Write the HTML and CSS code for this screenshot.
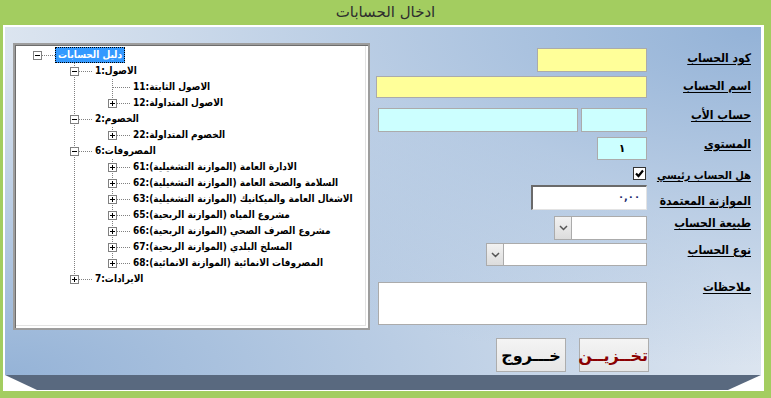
FILE: index.html
```html
<!DOCTYPE html>
<html lang="ar">
<head>
    <meta charset="UTF-8">
    <meta name="viewport" content="width=device-width, initial-scale=1.0">
    <title>ادخال الحسابات</title>
    <link rel="stylesheet" href="styles.css">
</head>
<body>
    <div class="window">
        <div class="title-bar">ادخال الحسابات</div>
        <div class="frame">
            <div class="panel">
                <!-- شجرة دليل الحسابات -->
                <div class="tree-box">
                    <ul class="tree">
                        <li class="node">
                            <div class="row"><span class="exp"></span><span class="dots"></span><span class="label selected">دليل الحسابات</span></div>
                            <ul class="children lvl1">
                                <li class="node">
                                    <div class="row"><span class="exp"></span><span class="dots"></span><span class="label">الاصول:1</span></div>
                                    <ul class="children lvl2">
                                        <li class="node"><div class="row"><span class="leaf"></span><span class="dots long"></span><span class="label">الاصول الثابتة:11</span></div></li>
                                        <li class="node"><div class="row"><span class="exp plus"></span><span class="dots"></span><span class="label">الاصول المتداولة:12</span></div></li>
                                    </ul>
                                </li>
                                <li class="node">
                                    <div class="row"><span class="exp"></span><span class="dots"></span><span class="label">الخصوم:2</span></div>
                                    <ul class="children lvl2">
                                        <li class="node"><div class="row"><span class="exp plus"></span><span class="dots"></span><span class="label">الخصوم المتداولة:22</span></div></li>
                                    </ul>
                                </li>
                                <li class="node">
                                    <div class="row"><span class="exp"></span><span class="dots"></span><span class="label">المصروفات:6</span></div>
                                    <ul class="children lvl2">
                                        <li class="node"><div class="row"><span class="exp plus"></span><span class="dots"></span><span class="label">الادارة العامة (الموازنة التشغيلية):61</span></div></li>
                                        <li class="node"><div class="row"><span class="exp plus"></span><span class="dots"></span><span class="label">السلامة والصحة العامة (الموازنة التشغيلية):62</span></div></li>
                                        <li class="node"><div class="row"><span class="exp plus"></span><span class="dots"></span><span class="label">الاشغال العامة والميكانيك (الموازنة التشغيلية):63</span></div></li>
                                        <li class="node"><div class="row"><span class="exp plus"></span><span class="dots"></span><span class="label">مشروع المياه (الموازنة الربحية):65</span></div></li>
                                        <li class="node"><div class="row"><span class="exp plus"></span><span class="dots"></span><span class="label">مشروع الصرف الصحي (الموازنة الربحية):66</span></div></li>
                                        <li class="node"><div class="row"><span class="exp plus"></span><span class="dots"></span><span class="label">المسلخ البلدي (الموازنة الربحية):67</span></div></li>
                                        <li class="node"><div class="row"><span class="exp plus"></span><span class="dots"></span><span class="label">المصروفات الانمائية (الموازنة الانمائية):68</span></div></li>
                                    </ul>
                                </li>
                                <li class="node">
                                    <div class="row"><span class="exp plus"></span><span class="dots"></span><span class="label">الايرادات:7</span></div>
                                </li>
                            </ul>
                        </li>
                    </ul>
                </div>

                <!-- نموذج بيانات الحساب -->
                <div class="form">
                    <div class="form-row row-code">
                        <div class="lbl">كود الحساب</div>
                        <input class="field yellow w-code" type="text">
                    </div>
                    <div class="form-row row-name">
                        <div class="lbl">اسم الحساب</div>
                        <input class="field yellow w-full" type="text">
                    </div>
                    <div class="form-row row-parent">
                        <div class="lbl">حساب الأب</div>
                        <input class="field cyan w-parent-code" type="text">
                        <input class="field cyan w-parent-name" type="text">
                    </div>
                    <div class="form-row row-level">
                        <div class="lbl">المستوى</div>
                        <input class="field cyan w-level" type="text" value="١">
                    </div>
                    <div class="form-row row-main">
                        <div class="lbl lbl-tight">هل الحساب رئيسي</div>
                        <span class="check">
                            <svg width="11" height="11" viewBox="0 0 11 11"><path d="M2 5.5 L4.5 8 L9 2.5" fill="none" stroke="#000" stroke-width="2.2"/></svg>
                        </span>
                    </div>
                    <div class="form-row row-budget">
                        <div class="lbl">الموازنة المعتمدة</div>
                        <div class="field sunken w-budget">٠,٠٠</div>
                    </div>
                    <div class="form-row row-nature">
                        <div class="lbl">طبيعة الحساب</div>
                        <div class="combo w-nature">
                            <span class="combo-text"></span>
                            <span class="combo-btn"><svg width="9" height="6" viewBox="0 0 9 6"><path d="M1 1 L4.5 4.5 L8 1" fill="none" stroke="#555" stroke-width="1.5"/></svg></span>
                        </div>
                    </div>
                    <div class="form-row row-type">
                        <div class="lbl">نوع الحساب</div>
                        <div class="combo w-type">
                            <span class="combo-text"></span>
                            <span class="combo-btn"><svg width="9" height="6" viewBox="0 0 9 6"><path d="M1 1 L4.5 4.5 L8 1" fill="none" stroke="#555" stroke-width="1.5"/></svg></span>
                        </div>
                    </div>
                    <div class="form-row row-notes">
                        <div class="lbl">ملاحظات</div>
                        <textarea class="field w-notes"></textarea>
                    </div>
                    <div class="buttons">
                        <button class="btn btn-save" type="button">تخــزيــن</button>
                        <button class="btn btn-exit" type="button">خـــروج</button>
                    </div>
                </div>
            </div>
            <div class="strip"></div>
        </div>
    </div>
</body>
</html>
```

FILE: styles.css
```css
* {
    box-sizing: border-box;
}

body {
    margin: 0;
    padding: 0;
    width: 771px;
    height: 398px;
    overflow: hidden;
    background-color: #a3cd60;
    font-family: "DejaVu Sans", sans-serif;
}

.window {
    width: 771px;
    height: 398px;
}

/* شريط العنوان الأخضر */
.title-bar {
    height: 25px;
    line-height: 25px;
    text-align: center;
    font-size: 15px;
    color: #2e2e2e;
}

.frame {
    margin: 0 7px 0 3px;
    height: 366px;
    border-style: solid;
    border-color: #fff;
    border-width: 2px 3px 1px 2px;
    background-color: #fff;
}

.panel {
    height: 348px;
    display: flex;
    align-items: flex-start;
    padding: 16px 10px 0 8px;
    background:
        radial-gradient(760px 340px at 100% 0%, #93b2d7, rgba(147, 178, 215, 0)),
        radial-gradient(760px 320px at 0% 100%, #95b3d7, rgba(149, 179, 215, 0)),
        #dce5f0;
}

/* الشريط الداكن أسفل النافذة */
.strip {
    height: 15px;
    background-color: #59697f;
    clip-path: polygon(0 0, 100% 0, calc(100% - 33px) 100%, 32px 100%);
}

/* صندوق الشجرة */
.tree-box {
    width: 357px;
    height: 287px;
    background-color: #fff;
    border: 2px solid #9d9d9d;
    box-shadow: inset 1px 1px 0 #6d6d6d, inset -2px -2px 0 #fff, inset -3px -3px 0 #e3e3e3;
    font-family: "DejaVu Sans Condensed", "DejaVu Sans", sans-serif;
    font-stretch: condensed;
    font-size: 10px;
    font-weight: bold;
    color: #000;
    overflow: hidden;
}

.tree,
.children {
    list-style: none;
    margin: 0;
    padding: 0;
}

.tree {
    padding: 2px 0 0 18px;
}

.lvl1 {
    padding-left: 37px;
}

.lvl2 {
    padding-left: 38px;
}

.node {
    position: relative;
}

.children > .node::before {
    content: "";
    position: absolute;
    left: 4px;
    top: 0;
    bottom: 0;
    width: 1px;
    background-image: linear-gradient(to bottom, #808080 1px, transparent 1px);
    background-size: 1px 2px;
}

.children > .node:last-child::before {
    bottom: auto;
    height: 8px;
}

.row {
    display: flex;
    align-items: center;
    height: 16px;
    white-space: nowrap;
}

.exp {
    position: relative;
    z-index: 1;
    flex: none;
    width: 9px;
    height: 9px;
    border: 1px solid #808080;
    background-color: #fff;
}

.exp::before {
    content: "";
    position: absolute;
    left: 1px;
    top: 3px;
    width: 5px;
    height: 1px;
    background-color: #000;
}

.exp.plus::after {
    content: "";
    position: absolute;
    left: 3px;
    top: 1px;
    width: 1px;
    height: 5px;
    background-color: #000;
}

.leaf {
    flex: none;
    width: 5px;
}

.dots {
    flex: none;
    width: 13px;
    height: 1px;
    background-image: linear-gradient(to right, #808080 1px, transparent 1px);
    background-size: 2px 1px;
}

.dots.long {
    width: 17px;
}

.label {
    flex: none;
    direction: rtl;
    unicode-bidi: isolate;
    padding: 0 2px;
    line-height: 14px;
    border: 1px solid transparent;
}

.label.selected {
    background-color: #3399ff;
    color: #fff;
    border: 1px dotted #000;
}

/* النموذج */
.form {
    flex: 1;
    direction: rtl;
    margin: 5px 0 0 6px;
}

.form-row {
    display: flex;
    align-items: flex-start;
}

.lbl {
    flex: none;
    width: 104px;
    font-family: "DejaVu Sans Condensed", "DejaVu Sans", sans-serif;
    font-stretch: condensed;
    font-size: 12px;
    font-weight: bold;
    line-height: 16px;
    color: #000;
    text-decoration: underline;
    text-underline-offset: 2px;
    white-space: nowrap;
}

.lbl-tight {
    font-size: 11px;
}

.row-code { height: 24px; }
.row-code .lbl { margin-top: 2px; }

.row-name { height: 22px; margin-top: 4px; }
.row-name .lbl { margin-top: 2px; }

.row-parent { height: 24px; margin-top: 10px; }
.row-parent .lbl { margin-top: -1px; }

.row-level { height: 23px; margin-top: 5px; }
.row-level .lbl { margin-top: -1px; }

.row-main { height: 13px; margin-top: 7px; }
.row-main .lbl { margin-top: 1px; }

.row-budget { height: 25px; margin-top: 5px; }
.row-budget .lbl { margin-top: 8px; }

.row-nature { height: 24px; margin-top: 6px; }
.row-nature .lbl { margin-top: -1px; }

.row-type { height: 23px; margin-top: 3px; }
.row-type .lbl { margin-top: -1px; }

.row-notes { height: 43px; margin-top: 16px; }
.row-notes .lbl { margin-top: -3px; }

.field {
    height: 100%;
    margin: 0;
    padding: 0 4px;
    border: 1px solid #ababab;
    background-color: #fff;
    font-family: "DejaVu Sans", sans-serif;
    font-size: 11px;
    font-weight: bold;
    outline: none;
}

.yellow {
    background-color: #ffff99;
}

.cyan {
    background-color: #ccffff;
}

.w-code { width: 110px; }
.w-full { width: 271px; }
.w-parent-code { width: 66px; }
.w-parent-name { width: 200px; margin-right: 3px; }
.w-level { width: 50px; text-align: center; }
.w-budget { width: 116px; }
.w-notes { width: 269px; resize: none; }

.sunken {
    border-width: 2px 1px 1px 2px;
    border-color: #6a6a6a #e3e3e3 #e3e3e3 #6a6a6a;
    border-style: solid;
    font-size: 10px;
    line-height: 20px;
    padding: 0 6px;
    color: #1c2a6b;
}

.check {
    flex: none;
    width: 13px;
    height: 13px;
    margin-right: 1px;
    border: 1px solid #333;
    background-color: #fff;
    display: flex;
    align-items: center;
    justify-content: center;
}

.combo {
    height: 100%;
    display: flex;
    border: 1px solid #ababab;
    background-color: #fff;
}

.w-nature { width: 93px; }
.w-type { width: 161px; }

.combo-text {
    flex: 1;
}

.combo-btn {
    flex: none;
    width: 17px;
    display: flex;
    align-items: center;
    justify-content: center;
    background: linear-gradient(#f2f2f2, #dcdcdc);
    border-right: 1px solid #ababab;
}

/* الأزرار */
.buttons {
    display: flex;
    gap: 13px;
    margin: 13px 102px 0 0;
    height: 34px;
}

.btn {
    width: 70px;
    height: 34px;
    padding: 0;
    border: 1px solid #adadad;
    background: linear-gradient(#f4f4f4, #e6e6e6);
    font-family: "DejaVu Sans", sans-serif;
    font-size: 16px;
    font-weight: bold;
    cursor: pointer;
}

.btn-save {
    color: #8b0000;
}

.btn-exit {
    color: #000;
}
```
